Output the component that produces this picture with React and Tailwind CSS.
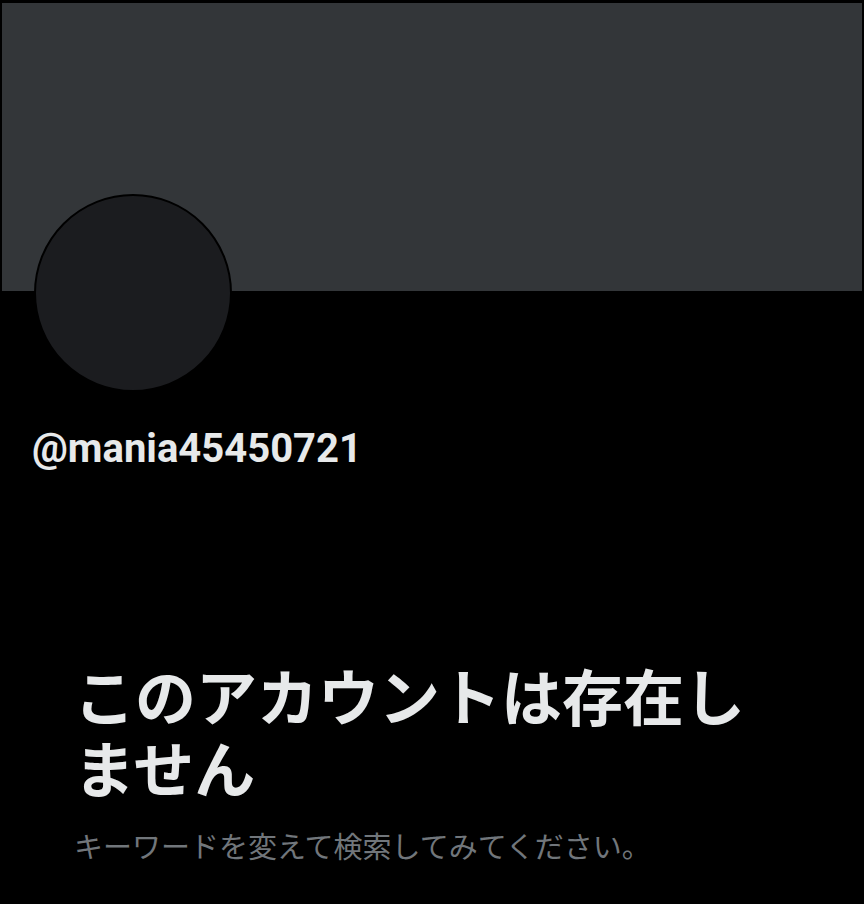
export default function App() {
  return (
    <div
      className="min-h-[904px] w-[864px] bg-black pt-[3px]"
      style={{ fontFamily: "Roboto, 'Noto Sans CJK JP', sans-serif" }}
    >
      {/* Banner */}
      <div className="mx-[2px] h-[288px] bg-[#333639]" />

      {/* Avatar */}
      <div className="ml-[34px] -mt-[97px] h-[198px] w-[198px] rounded-full border-2 border-black bg-[#1b1c1f]" />

      {/* Handle */}
      <div className="mt-[33px] pl-[32px] text-[40px] font-bold leading-[48px] text-[#e7e9ea]">
        @mania45450721
      </div>

      {/* Message */}
      <div className="mt-[186px] w-[800px] pl-[74px]">
        <h1
          className="text-[61px] font-bold leading-[72px] text-[#e7e9ea]"
          style={{ fontFamily: "'Noto Sans CJK JP', sans-serif" }}
        >
          このアカウントは存在しません
        </h1>
        <p
          className="mt-[22px] text-[29px] leading-[40px] text-[#71767b]"
          style={{ fontFamily: "'Noto Sans CJK JP', sans-serif" }}
        >
          キーワードを変えて検索してみてください。
        </p>
      </div>
    </div>
  );
}
